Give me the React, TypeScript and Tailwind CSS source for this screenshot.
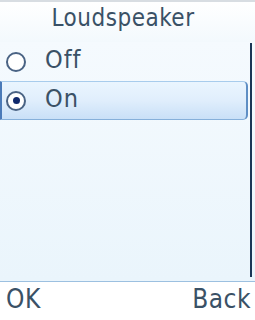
const font = { fontFamily: '"DejaVu Sans Condensed", "DejaVu Sans", sans-serif' }

const Radio = ({ checked }: { checked?: boolean }) => (
  <div className="flex h-[20px] w-[20px] items-center justify-center rounded-full border-2 border-[#4a6384] bg-white">
    {checked && <div className="h-[7px] w-[7px] rounded-full bg-[#10296c]" />}
  </div>
)

export default function App() {
  return (
    <div
      className="flex h-[320px] w-[255px] flex-col overflow-hidden bg-white text-[#3a5166]"
      style={font}
    >
      <div className="h-[2px] bg-[#d8dde2]" />
      <div className="flex h-[40px] items-start justify-center bg-gradient-to-b from-white to-[#f3f9fd] pr-[9px] pt-[2px] text-[24px] leading-[28px] tracking-[0.5px]">
        Loudspeaker
      </div>
      <div className="flex flex-1 bg-gradient-to-b from-[#f5fafe] to-[#eaf5fc]">
        <div className="flex flex-1 flex-col">
          <div className="flex h-[39px] items-center gap-[19px] pl-[6px] text-[25px] tracking-[1px]">
            <Radio />
            <span className="-mt-[3px]">Off</span>
          </div>
          <div className="flex h-[39px] items-center gap-[19px] rounded-r-[5px] border-y border-l-2 border-r-2 border-t-[#a8ccec] border-b-[#86b0da] border-l-[#4a7ab8] border-r-[#5e8ec4] bg-gradient-to-b from-[#eaf5fe] via-[#e0eefc] to-[#c9e0f7] pl-[4px] text-[25px] tracking-[1px]">
            <Radio checked />
            <span className="-mt-[3px]">On</span>
          </div>
        </div>
        <div className="ml-[2px] mr-[3px] mt-[1px] mb-[4px] w-[2px] bg-[#1a3656]" />
      </div>
      <div className="h-[1px] bg-[#9cc0e0]" />
      <div className="flex h-[38px] items-start justify-between pl-[6px] pr-[4px] pt-[3px] text-[26px] leading-[28px] tracking-[0.5px]">
        <span>OK</span>
        <span>Back</span>
      </div>
    </div>
  )
}
